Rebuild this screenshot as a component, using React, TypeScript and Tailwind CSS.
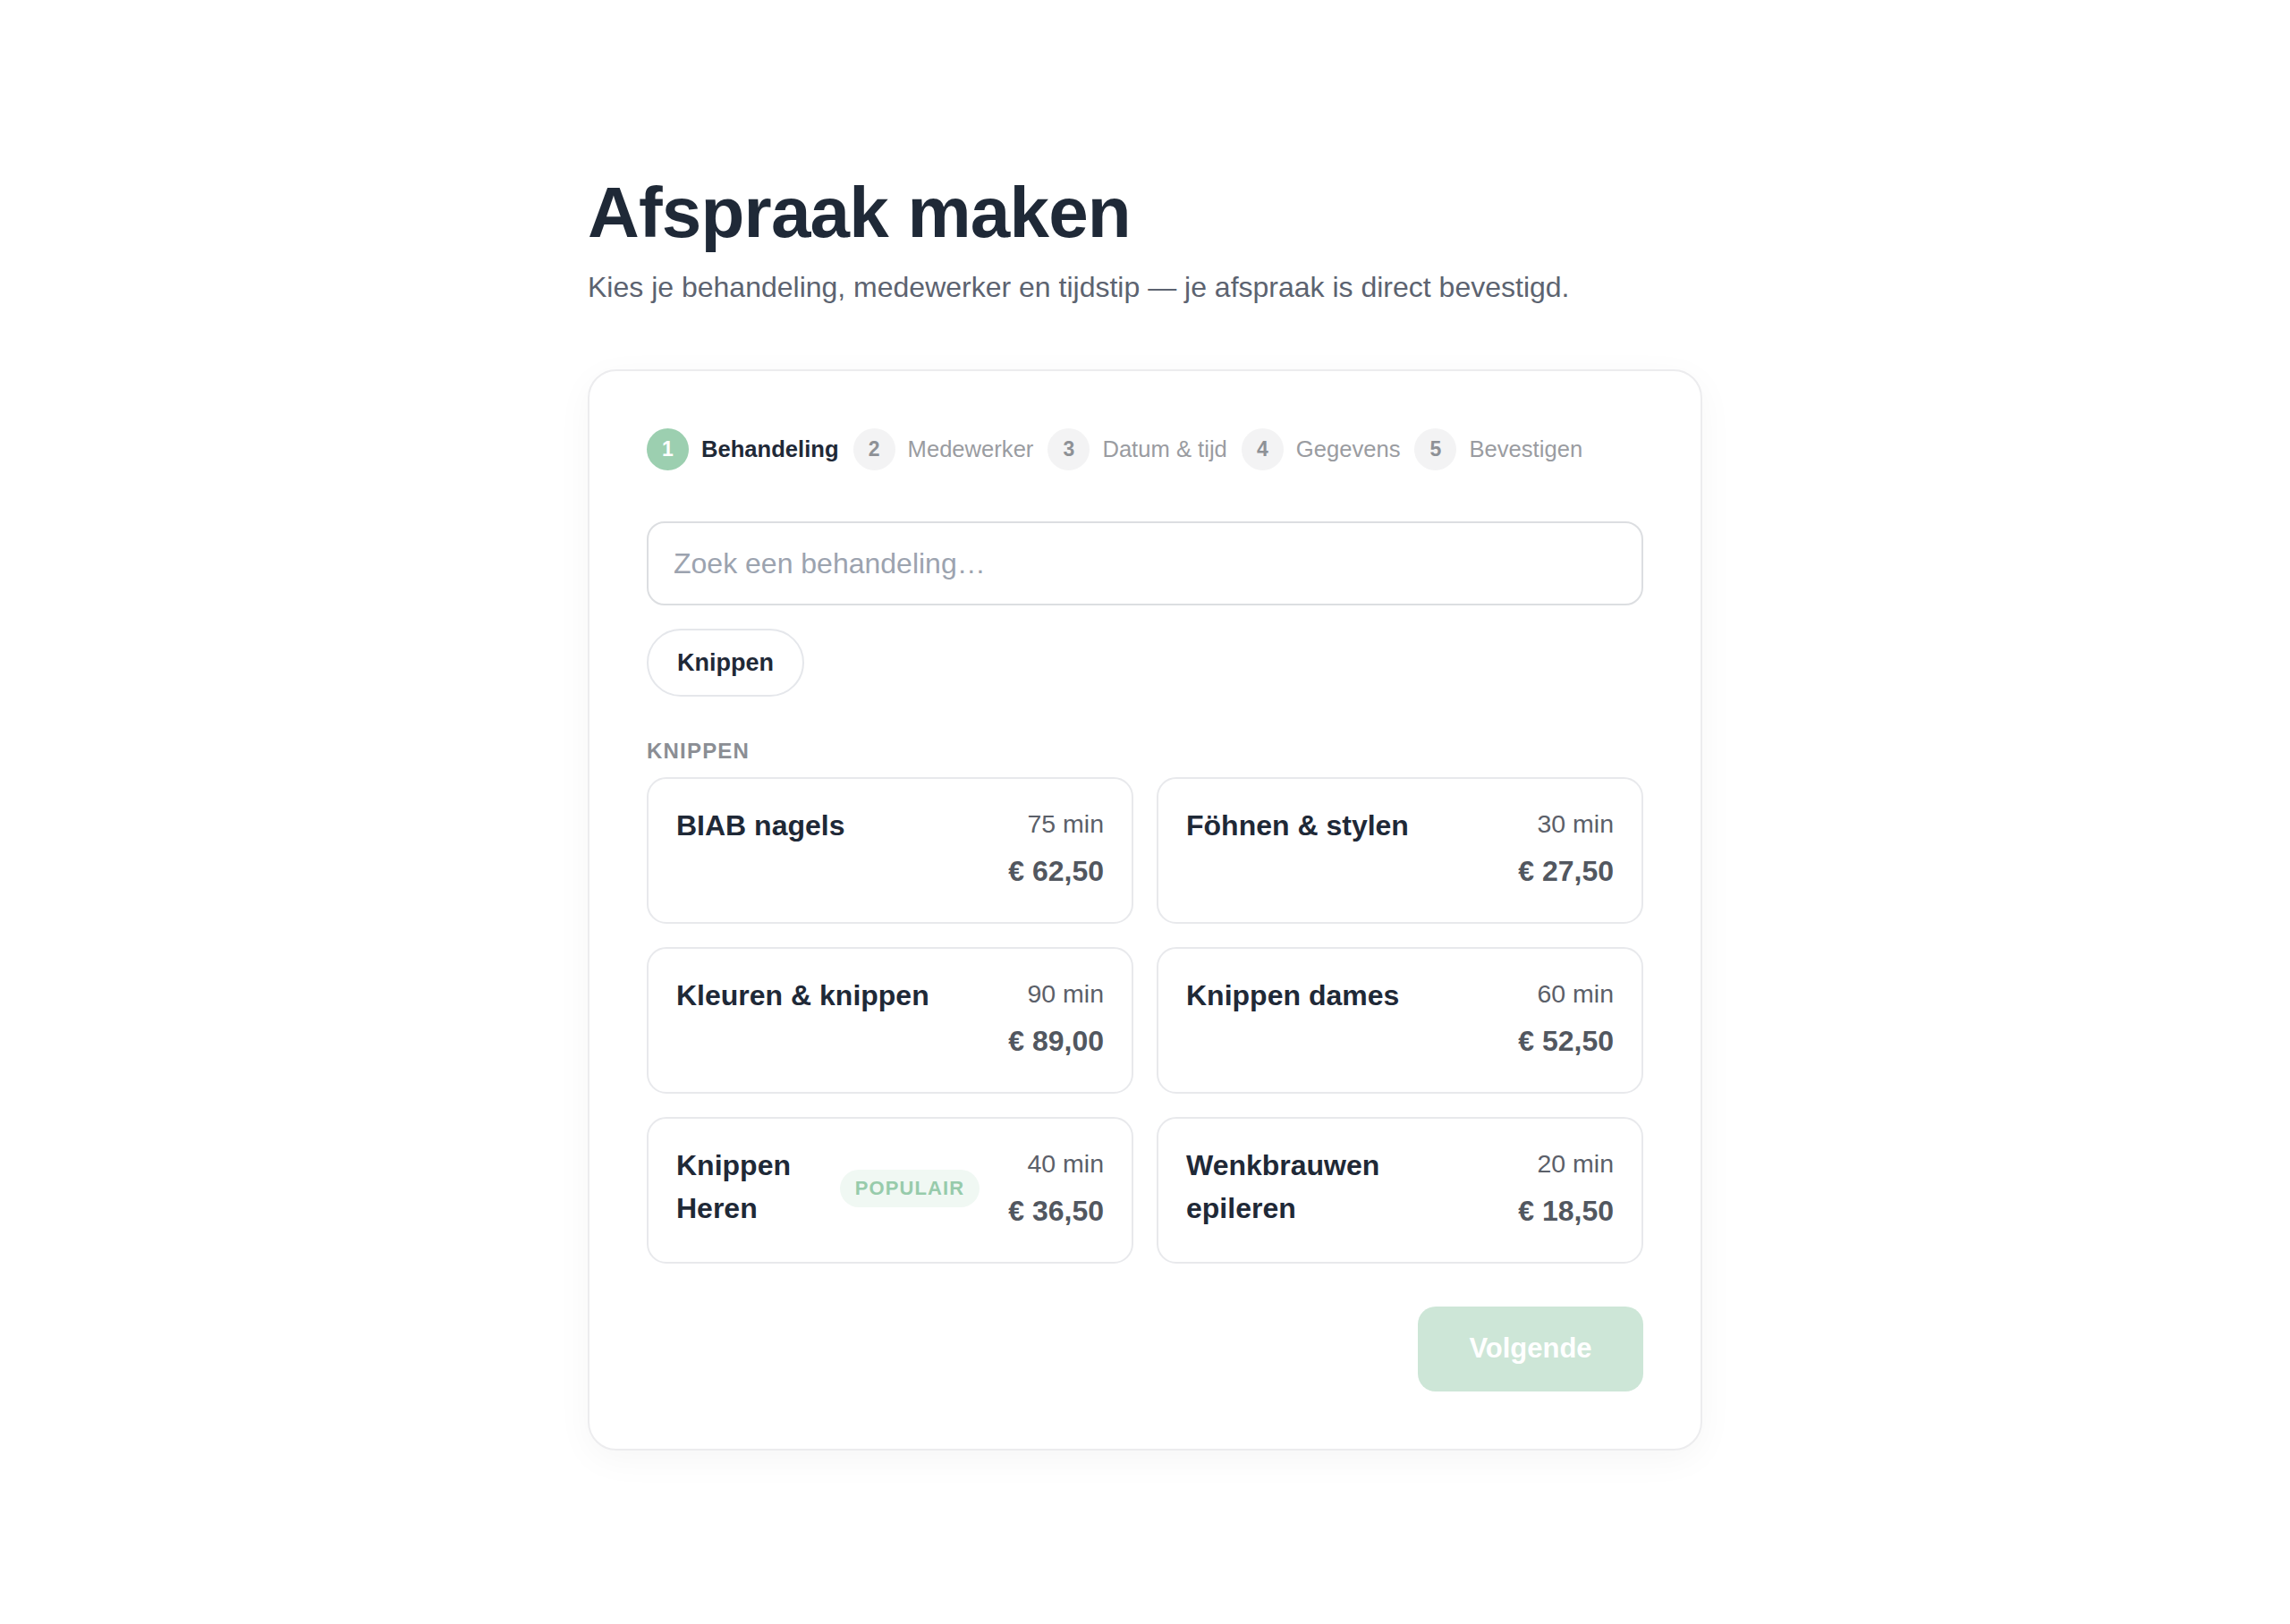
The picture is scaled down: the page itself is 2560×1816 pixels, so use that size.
import React from 'react'

type Treatment = {
  name: string
  minutes: number
  price: string
  popular?: boolean
}

const steps = ['Behandeling', 'Medewerker', 'Datum & tijd', 'Gegevens', 'Bevestigen']

const treatments: Treatment[] = [
  { name: 'BIAB nagels', minutes: 75, price: '€ 62,50' },
  { name: 'Föhnen & stylen', minutes: 30, price: '€ 27,50' },
  { name: 'Kleuren & knippen', minutes: 90, price: '€ 89,00' },
  { name: 'Knippen dames', minutes: 60, price: '€ 52,50' },
  { name: 'Knippen Heren', minutes: 40, price: '€ 36,50', popular: true },
  { name: 'Wenkbrauwen epileren', minutes: 20, price: '€ 18,50' }
]

const Stepper = ({ active }: { active: number }) => (
  <div className="flex items-center gap-[16px]">
    {steps.map((label, i) => {
      const isActive = i === active
      return (
        <div key={label} className="flex items-center gap-[14px]">
          <div
            className={
              isActive
                ? 'flex h-[47px] w-[47px] items-center justify-center rounded-full bg-[#9ccfb0] text-[23px] font-bold text-white'
                : 'flex h-[47px] w-[47px] items-center justify-center rounded-full bg-[#f3f3f4] text-[23px] font-bold text-[#8e9196]'
            }
          >
            {i + 1}
          </div>
          <span
            className={
              isActive
                ? 'text-[25.6px] font-bold text-[#1f2937]'
                : 'text-[25.6px] text-[#9a9ca1]'
            }
          >
            {label}
          </span>
        </div>
      )
    })}
  </div>
)

const TreatmentCard = ({ item }: { item: Treatment }) => (
  <button
    type="button"
    className="flex items-start gap-[32px] rounded-[22px] border-2 border-[#e8e9ec] bg-white px-[31px] pt-[28px] pb-[33px] text-left"
  >
    <div className="min-w-0 flex-1 text-[32px] leading-[48px] font-bold text-[#1f2937]">
      {item.name}
    </div>
    {item.popular && (
      <span className="flex h-[42px] items-center self-center rounded-full bg-[#f0f8f3] px-[17px] text-[22px] font-bold tracking-wider text-[#97cbab]">
        POPULAIR
      </span>
    )}
    <div className="flex shrink-0 flex-col items-end">
      <span className="text-[28.5px] leading-[44px] text-[#5b6069]">
        {item.minutes} min
      </span>
      <span className="mt-[7px] text-[32px] leading-[48px] font-bold text-[#52575f]">
        {item.price}
      </span>
    </div>
  </button>
)

export default function App() {
  return (
    <div className="min-h-screen bg-white font-['Liberation_Sans',Arial,sans-serif]">
      <div className="mx-auto w-[1246px] pt-[194px] pb-[120px]">
        <h1 className="text-[80px] leading-[88px] font-bold tracking-[-0.01em] text-[#1f2937]">
          Afspraak maken
        </h1>
        <p className="mt-[15px] text-[32px] leading-[48px] text-[#5c6370]">
          Kies je behandeling, medewerker en tijdstip — je afspraak is direct bevestigd.
        </p>

        <div className="mt-[68px] flex flex-col rounded-[32px] border-2 border-[#ececee] bg-white p-[64px] shadow-[0_10px_40px_rgba(0,0,0,0.04)]">
          <Stepper active={0} />

          <input
            type="text"
            placeholder="Zoek een behandeling…"
            className="mt-[57px] h-[94px] w-full rounded-[20px] border-2 border-[#dcdee1] px-[28px] text-[32px] text-[#1f2937] outline-none placeholder:text-[#9ca3af]"
          />

          <button
            type="button"
            className="mt-[26px] h-[76px] self-start rounded-full border-2 border-[#e5e7eb] px-[32px] text-[27px] font-bold text-[#1f2937]"
          >
            Knippen
          </button>

          <div className="mt-[45px] text-[24px] leading-[32px] font-bold tracking-wider text-[#8b8e94]">
            KNIPPEN
          </div>

          <div className="mt-[13px] grid grid-cols-2 gap-[26px]">
            {treatments.map((t) => (
              <TreatmentCard key={t.name} item={t} />
            ))}
          </div>

          <div className="mt-[48px] flex justify-end">
            <button
              type="button"
              disabled
              className="h-[95px] w-[252px] rounded-[20px] bg-[#cde6d7] text-[31px] font-bold text-white"
            >
              Volgende
            </button>
          </div>
        </div>
      </div>
    </div>
  )
}
